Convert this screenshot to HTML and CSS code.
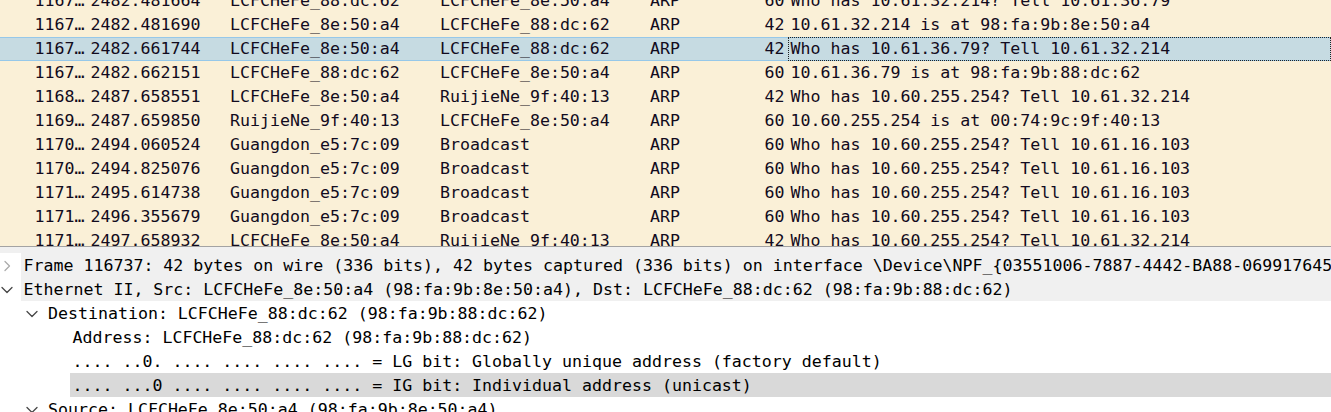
FILE: index.html
```html
<!DOCTYPE html>
<html lang="en">
<head>
<meta charset="utf-8">
<title>Wireshark packets</title>
<link rel="stylesheet" href="styles.css">
</head>
<body>
<div class="app">
  <div class="plist">
    <div class="plist-inner">
      <div class="prow"><div class="c no">1167…</div><div class="c">2482.481664</div><div class="c">LCFCHeFe_88:dc:62</div><div class="c">LCFCHeFe_8e:50:a4</div><div class="c">ARP</div><div class="c len">60</div><div class="c info">Who has 10.61.32.214? Tell 10.61.36.79</div></div>
      <div class="prow"><div class="c no">1167…</div><div class="c">2482.481690</div><div class="c">LCFCHeFe_8e:50:a4</div><div class="c">LCFCHeFe_88:dc:62</div><div class="c">ARP</div><div class="c len">42</div><div class="c info">10.61.32.214 is at 98:fa:9b:8e:50:a4</div></div>
      <div class="prow sel"><div class="c no">1167…</div><div class="c">2482.661744</div><div class="c">LCFCHeFe_8e:50:a4</div><div class="c">LCFCHeFe_88:dc:62</div><div class="c">ARP</div><div class="c len">42</div><div class="c info focus">Who has 10.61.36.79? Tell 10.61.32.214</div></div>
      <div class="prow"><div class="c no">1167…</div><div class="c">2482.662151</div><div class="c">LCFCHeFe_88:dc:62</div><div class="c">LCFCHeFe_8e:50:a4</div><div class="c">ARP</div><div class="c len">60</div><div class="c info">10.61.36.79 is at 98:fa:9b:88:dc:62</div></div>
      <div class="prow"><div class="c no">1168…</div><div class="c">2487.658551</div><div class="c">LCFCHeFe_8e:50:a4</div><div class="c">RuijieNe_9f:40:13</div><div class="c">ARP</div><div class="c len">42</div><div class="c info">Who has 10.60.255.254? Tell 10.61.32.214</div></div>
      <div class="prow"><div class="c no">1169…</div><div class="c">2487.659850</div><div class="c">RuijieNe_9f:40:13</div><div class="c">LCFCHeFe_8e:50:a4</div><div class="c">ARP</div><div class="c len">60</div><div class="c info">10.60.255.254 is at 00:74:9c:9f:40:13</div></div>
      <div class="prow"><div class="c no">1170…</div><div class="c">2494.060524</div><div class="c">Guangdon_e5:7c:09</div><div class="c">Broadcast</div><div class="c">ARP</div><div class="c len">60</div><div class="c info">Who has 10.60.255.254? Tell 10.61.16.103</div></div>
      <div class="prow"><div class="c no">1170…</div><div class="c">2494.825076</div><div class="c">Guangdon_e5:7c:09</div><div class="c">Broadcast</div><div class="c">ARP</div><div class="c len">60</div><div class="c info">Who has 10.60.255.254? Tell 10.61.16.103</div></div>
      <div class="prow"><div class="c no">1171…</div><div class="c">2495.614738</div><div class="c">Guangdon_e5:7c:09</div><div class="c">Broadcast</div><div class="c">ARP</div><div class="c len">60</div><div class="c info">Who has 10.60.255.254? Tell 10.61.16.103</div></div>
      <div class="prow"><div class="c no">1171…</div><div class="c">2496.355679</div><div class="c">Guangdon_e5:7c:09</div><div class="c">Broadcast</div><div class="c">ARP</div><div class="c len">60</div><div class="c info">Who has 10.60.255.254? Tell 10.61.16.103</div></div>
      <div class="prow"><div class="c no">1171…</div><div class="c">2497.658932</div><div class="c">LCFCHeFe_8e:50:a4</div><div class="c">RuijieNe_9f:40:13</div><div class="c">ARP</div><div class="c len">42</div><div class="c info">Who has 10.60.255.254? Tell 10.61.32.214</div></div>
    </div>
  </div>
  <div class="splitter"></div>
  <div class="details">
    <div class="drow l0 hl">
      <span class="chev"><svg width="21" height="24" viewBox="0 0 21 24"><path class="collapsed" d="M5 8.5 L9.5 13 L5 17.5" /></svg></span>
      <span class="label">Frame 116737: 42 bytes on wire (336 bits), 42 bytes captured (336 bits) on interface \Device\NPF_{03551006-7887-4442-BA88-069917645A3E}, id 0</span>
    </div>
    <div class="drow l0 hl">
      <span class="chev"><svg width="21" height="24" viewBox="0 0 21 24"><path class="expanded" d="M2 10.5 L7 15.5 L12 10.5" /></svg></span>
      <span class="label">Ethernet II, Src: LCFCHeFe_8e:50:a4 (98:fa:9b:8e:50:a4), Dst: LCFCHeFe_88:dc:62 (98:fa:9b:88:dc:62)</span>
    </div>
    <div class="drow l1">
      <span class="chev"><svg width="21" height="24" viewBox="0 0 21 24"><path class="expanded" d="M2 10.5 L7 15.5 L12 10.5" /></svg></span>
      <span class="label">Destination: LCFCHeFe_88:dc:62 (98:fa:9b:88:dc:62)</span>
    </div>
    <div class="drow l2">
      <span class="chev"></span>
      <span class="label">Address: LCFCHeFe_88:dc:62 (98:fa:9b:88:dc:62)</span>
    </div>
    <div class="drow l2">
      <span class="chev"></span>
      <span class="label">.... ..0. .... .... .... .... = LG bit: Globally unique address (factory default)</span>
    </div>
    <div class="drow l2 selected">
      <span class="chev"></span>
      <span class="label">.... ...0 .... .... .... .... = IG bit: Individual address (unicast)</span>
    </div>
    <div class="drow l1">
      <span class="chev"><svg width="21" height="24" viewBox="0 0 21 24"><path class="expanded" d="M2 10.5 L7 15.5 L12 10.5" /></svg></span>
      <span class="label">Source: LCFCHeFe_8e:50:a4 (98:fa:9b:8e:50:a4)</span>
    </div>
  </div>
</div>
</body>
</html>
```

FILE: styles.css
```css
html, body {
  margin: 0;
  padding: 0;
  background: #ffffff;
}

body {
  width: 1331px;
  height: 412px;
  overflow: hidden;
  font-family: "DejaVu Sans Mono", "Liberation Mono", monospace;
  font-size: 16.6px;
}

.app {
  display: flex;
  flex-direction: column;
  height: 412px;
}

/* ---------- packet list ---------- */
.plist {
  height: 246px;
  overflow: hidden;
  background: #faf0d7;
  flex: none;
}

.plist-inner {
  margin-top: -11px;
}

.prow {
  display: grid;
  grid-template-columns: 90.5px 139.5px 210px 210px 96px 42px 1fr;
  height: 24px;
  line-height: 24px;
  color: #120b20;
  background: #faf0d7;
}

.prow .c {
  white-space: nowrap;
  overflow: hidden;
}

.prow .no {
  padding-left: 34.5px;
}

.prow .len {
  text-align: right;
  padding-right: 3.5px;
}

.prow .info {
  padding-left: 2.5px;
}

.prow.sel {
  background: #c6dbe2;
  box-shadow: inset 0 1px 0 #96c8e9, inset 0 -1px 0 #96c8e9;
}

.prow .focus {
  outline: 1px dotted #222222;
  outline-offset: -1px;
}

/* ---------- splitter ---------- */
.splitter {
  height: 6px;
  flex: none;
  border-top: 1px solid #a3a3a3;
  background: #f0f0f0;
}

/* ---------- details tree ---------- */
.details {
  flex: 1;
  overflow: hidden;
  background: #ffffff;
  color: #000000;
}

.drow {
  display: flex;
  height: 24px;
  white-space: nowrap;
}

.drow.l1 { padding-left: 24.5px; }
.drow.l2 { padding-left: 49px; }

.chev {
  flex: none;
  width: 21px;
  height: 24px;
}

.chev svg {
  display: block;
}

.chev path {
  fill: none;
  stroke-width: 1.3;
  stroke-linecap: round;
  stroke-linejoin: round;
}

.chev .collapsed { stroke: #ababab; }
.chev .expanded { stroke: #474747; }

.label {
  flex: 1;
  min-width: 0;
  overflow: hidden;
  padding-left: 2.5px;
  padding-top: 2px;
  height: 24px;
  box-sizing: border-box;
  line-height: 22px;
}

.drow.hl .label {
  background: #f0f0f0;
}

.drow.selected .label {
  background: #d9d9d9;
}
```
